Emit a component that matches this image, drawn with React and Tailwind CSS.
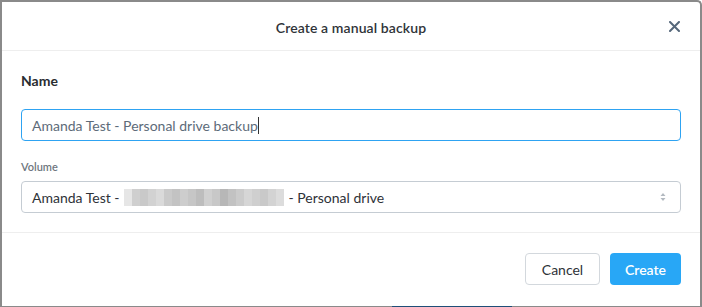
import React from "react";

const blurBlocks = [
  "#e6e6e6", "#cfcfcf", "#c9c9c9", "#d2d2d2", "#dadada", "#cacaca", "#c3c3c3", "#cdcdcd",
  "#c6c6c6", "#bdbdbd", "#d0d0d0", "#c8c8c8", "#b7b7b7", "#c2c2c2", "#cbcbcb", "#d6d6d6",
  "#cfcfcf", "#c9c9c9", "#d3d3d3", "#dcdcdc",
];

const App = () => {
  return (
    <div
      className="w-[702px] h-[307px] bg-white border-[2px] border-[#8a8a8a] border-b-0 rounded-tr-[5px] flex flex-col overflow-hidden relative"
      style={{ fontFamily: "Lato, 'Open Sans', sans-serif" }}
    >
      <div className="h-[49px] shrink-0 flex items-center justify-center relative border-b border-[#eeeeee]">
        <span className="text-[14px] font-semibold text-[#2f3338] tracking-[0.1px] mt-[2px]">
          Create a manual backup
        </span>
        <button className="absolute right-[20px] top-[19px] text-[#55677a]">
          <svg width="11" height="11" viewBox="0 0 11 11">
            <path d="M1 1 L10 10 M10 1 L1 10" stroke="currentColor" strokeWidth="2" strokeLinecap="round" />
          </svg>
        </button>
      </div>

      <div className="flex-1 px-[19px] pt-[21px] border-b border-[#eeeeee]">
        <div className="text-[14px] font-bold text-[#2a2d31] leading-[18px]">Name</div>
        <div className="mt-[19px] h-[32px] rounded-[4px] border border-[#2ea3f2] flex items-center px-[10px]">
          <span className="text-[14px] text-[#5d6b79]">Amanda Test - Personal drive backup</span>
          <span className="w-px h-[17px] bg-[#333]" />
        </div>
        <div className="mt-[19px] text-[11px] font-semibold text-[#6f7780] leading-[14px]">Volume</div>
        <div className="mt-[7px] h-[32px] rounded-[4px] border border-[#c5ccd3] flex items-center px-[10px]">
          <span className="text-[14px] text-[#2e3238]">Amanda Test -</span>
          <span className="flex ml-[4px] mr-[5px] h-[17px] items-stretch">
            {blurBlocks.map((c, i) => (
              <span key={i} className="w-[8px]" style={{ backgroundColor: c }} />
            ))}
          </span>
          <span className="text-[14px] text-[#2e3238]">- Personal drive</span>
          <svg className="ml-auto mr-[4px]" width="6" height="10" viewBox="0 0 6 10">
            <path d="M0.5 4 L3 1 L5.5 4 Z M0.5 6 L3 9 L5.5 6 Z" fill="#b3bac1" />
          </svg>
        </div>
        <div className="h-[18px]" />
      </div>

      <div className="h-[73px] shrink-0 flex items-center justify-end gap-[10px] px-[19px] pb-[1px]">
        <button className="h-[32px] w-[75px] rounded-[4px] border border-[#d3d8dd] bg-white text-[14px] text-[#2e3238]">
          Cancel
        </button>
        <button className="h-[32px] w-[71px] rounded-[4px] bg-[#28a7f6] text-[14px] font-semibold text-white">
          Create
        </button>
      </div>

      <div className="h-[1px] bg-[#8a8a8a] flex">
        <div className="ml-[390px] w-[120px] bg-[#1f4f78]" />
      </div>
    </div>
  );
};

export default App;
